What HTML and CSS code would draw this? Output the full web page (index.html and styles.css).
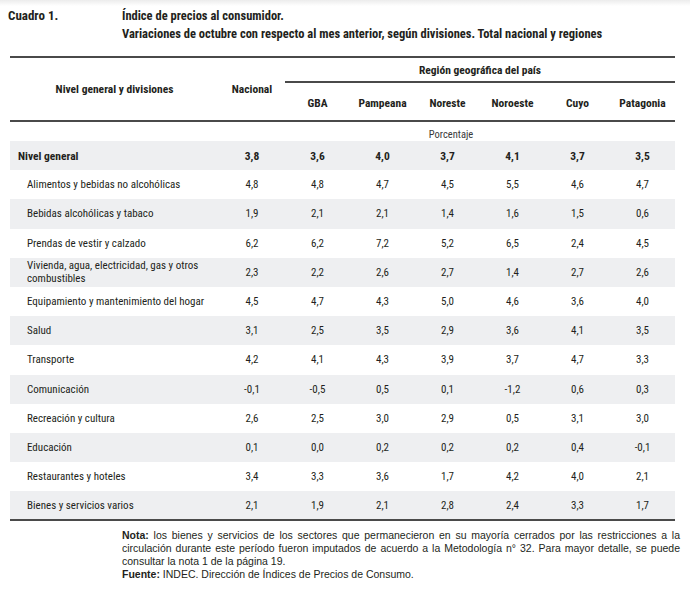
FILE: index.html
```html
<!DOCTYPE html>
<html lang="es">
<head>
<meta charset="utf-8">
<title>Cuadro 1</title>
<link rel="stylesheet" href="styles.css">
</head>
<body>
<div class="page">
  <div class="caption">
    <div class="cap-num">Cuadro 1.</div>
    <div class="cap-title">
      <div>Índice de precios al consumidor.</div>
      <div>Variaciones de octubre con respecto al mes anterior, según divisiones. Total nacional y regiones</div>
    </div>
  </div>
  <table class="data">
    <colgroup>
      <col class="c-label"><col class="c-nac"><col class="c-reg"><col class="c-reg"><col class="c-reg"><col class="c-reg"><col class="c-reg"><col class="c-reg">
    </colgroup>
    <thead>
      <tr class="h1">
        <th rowspan="2" class="h-label">Nivel general y divisiones</th>
        <th rowspan="2" class="h-nac">Nacional</th>
        <th colspan="6" class="h-region">Región geográfica del país</th>
      </tr>
      <tr class="h2">
        <th>GBA</th><th>Pampeana</th><th>Noreste</th><th>Noroeste</th><th>Cuyo</th><th>Patagonia</th>
      </tr>
    </thead>
    <tbody>
      <tr class="unit"><td></td><td colspan="7" class="unit-cell">Porcentaje</td></tr>
      <tr class="total"><td class="lbl">Nivel general</td><td>3,8</td><td>3,6</td><td>4,0</td><td>3,7</td><td>4,1</td><td>3,7</td><td>3,5</td></tr>
      <tr><td class="lbl sub">Alimentos y bebidas no alcohólicas</td><td>4,8</td><td>4,8</td><td>4,7</td><td>4,5</td><td>5,5</td><td>4,6</td><td>4,7</td></tr>
      <tr class="g"><td class="lbl sub">Bebidas alcohólicas y tabaco</td><td>1,9</td><td>2,1</td><td>2,1</td><td>1,4</td><td>1,6</td><td>1,5</td><td>0,6</td></tr>
      <tr><td class="lbl sub">Prendas de vestir y calzado</td><td>6,2</td><td>6,2</td><td>7,2</td><td>5,2</td><td>6,5</td><td>2,4</td><td>4,5</td></tr>
      <tr class="g"><td class="lbl sub two">Vivienda, agua, electricidad, gas y otros<br>combustibles</td><td>2,3</td><td>2,2</td><td>2,6</td><td>2,7</td><td>1,4</td><td>2,7</td><td>2,6</td></tr>
      <tr><td class="lbl sub">Equipamiento y mantenimiento del hogar</td><td>4,5</td><td>4,7</td><td>4,3</td><td>5,0</td><td>4,6</td><td>3,6</td><td>4,0</td></tr>
      <tr class="g"><td class="lbl sub">Salud</td><td>3,1</td><td>2,5</td><td>3,5</td><td>2,9</td><td>3,6</td><td>4,1</td><td>3,5</td></tr>
      <tr><td class="lbl sub">Transporte</td><td>4,2</td><td>4,1</td><td>4,3</td><td>3,9</td><td>3,7</td><td>4,7</td><td>3,3</td></tr>
      <tr class="g"><td class="lbl sub">Comunicación</td><td>-0,1</td><td>-0,5</td><td>0,5</td><td>0,1</td><td>-1,2</td><td>0,6</td><td>0,3</td></tr>
      <tr><td class="lbl sub">Recreación y cultura</td><td>2,6</td><td>2,5</td><td>3,0</td><td>2,9</td><td>0,5</td><td>3,1</td><td>3,0</td></tr>
      <tr class="g"><td class="lbl sub">Educación</td><td>0,1</td><td>0,0</td><td>0,2</td><td>0,2</td><td>0,2</td><td>0,4</td><td>-0,1</td></tr>
      <tr><td class="lbl sub">Restaurantes y hoteles</td><td>3,4</td><td>3,3</td><td>3,6</td><td>1,7</td><td>4,2</td><td>4,0</td><td>2,1</td></tr>
      <tr class="g last"><td class="lbl sub">Bienes y servicios varios</td><td>2,1</td><td>1,9</td><td>2,1</td><td>2,8</td><td>2,4</td><td>3,3</td><td>1,7</td></tr>
    </tbody>
  </table>
  <div class="notes">
    <p class="nota"><b>Nota:</b> los bienes y servicios de los sectores que permanecieron en su mayoría cerrados por las restricciones a la circulación durante este período fueron imputados de acuerdo a la Metodología n° 32. Para mayor detalle, se puede consultar la nota 1 de la página 19.</p>
    <p class="fuente"><b>Fuente:</b> INDEC. Dirección de Índices de Precios de Consumo.</p>
  </div>
</div>
</body>
</html>
```

FILE: styles.css
```css
html, body {
  margin: 0;
  padding: 0;
  background: #ffffff;
}
body {
  color: #231f20;
  font-family: Roboto, "DejaVu Sans Condensed", sans-serif;
  font-stretch: 75%;
}
.page {
  width: 690px;
  height: 590px;
  background: linear-gradient(to bottom, #ececec 0px, #ffffff 6px);
  padding-top: 7px;
  box-sizing: border-box;
}
.caption {
  display: flex;
  padding-left: 8px;
  font-weight: bold;
  font-size: 12.5px;
  line-height: 18px;
}
.cap-num {
  width: 114px;
  font-size: 13px;
}
.data {
  margin: 13px 0 0 10px;
  width: 665px;
  border-collapse: collapse;
  table-layout: fixed;
  font-size: 11px;
}
.c-label { width: 209px; }
.c-nac { width: 66px; }
.c-reg { width: 65px; }
.data thead {
  border-top: 2px solid #4a4a4a;
  border-bottom: 2px solid #4a4a4a;
}
.data th {
  font-weight: bold;
  font-size: 11.5px;
  padding: 0;
  text-align: center;
}
.h1 { height: 25px; }
.h-region {
  border-bottom: 2px solid #4a4a4a;
  vertical-align: middle;
  padding-top: 1px;
}
.h-label, .h-nac {
  vertical-align: middle;
  padding-top: 5px;
}
.h2 { height: 39px; }
.h2 th { vertical-align: middle; padding-top: 3px; }
.data td {
  padding: 0;
  text-align: center;
  vertical-align: middle;
}
.data tbody tr { height: 29.2px; }
.data tbody tr.unit { height: 20px; }
.unit-cell {
  font-size: 10.5px;
  color: #3a3a3a;
}
.data td.unit-cell { padding: 5px 0 0 8px; }
.data td.lbl {
  text-align: left;
  padding-left: 8px;
}
.data td.sub { padding-left: 17px; }
.data td.two {
  line-height: 13px;
}
.total td {
  font-weight: bold;
  font-size: 11.5px;
  background: #eeeff1;
}
.g td { background: #eeeff1; }
.last { border-bottom: 2px solid #4a4a4a; }
.notes {
  margin: 8px 10px 0 122px;
  font-family: "Liberation Sans", Arial, sans-serif;
  font-stretch: normal;
  font-size: 10.5px;
  line-height: 13px;
}
.notes p { margin: 0; }
.nota { text-align: justify; }
.fuente { margin-top: 4px; }
```
